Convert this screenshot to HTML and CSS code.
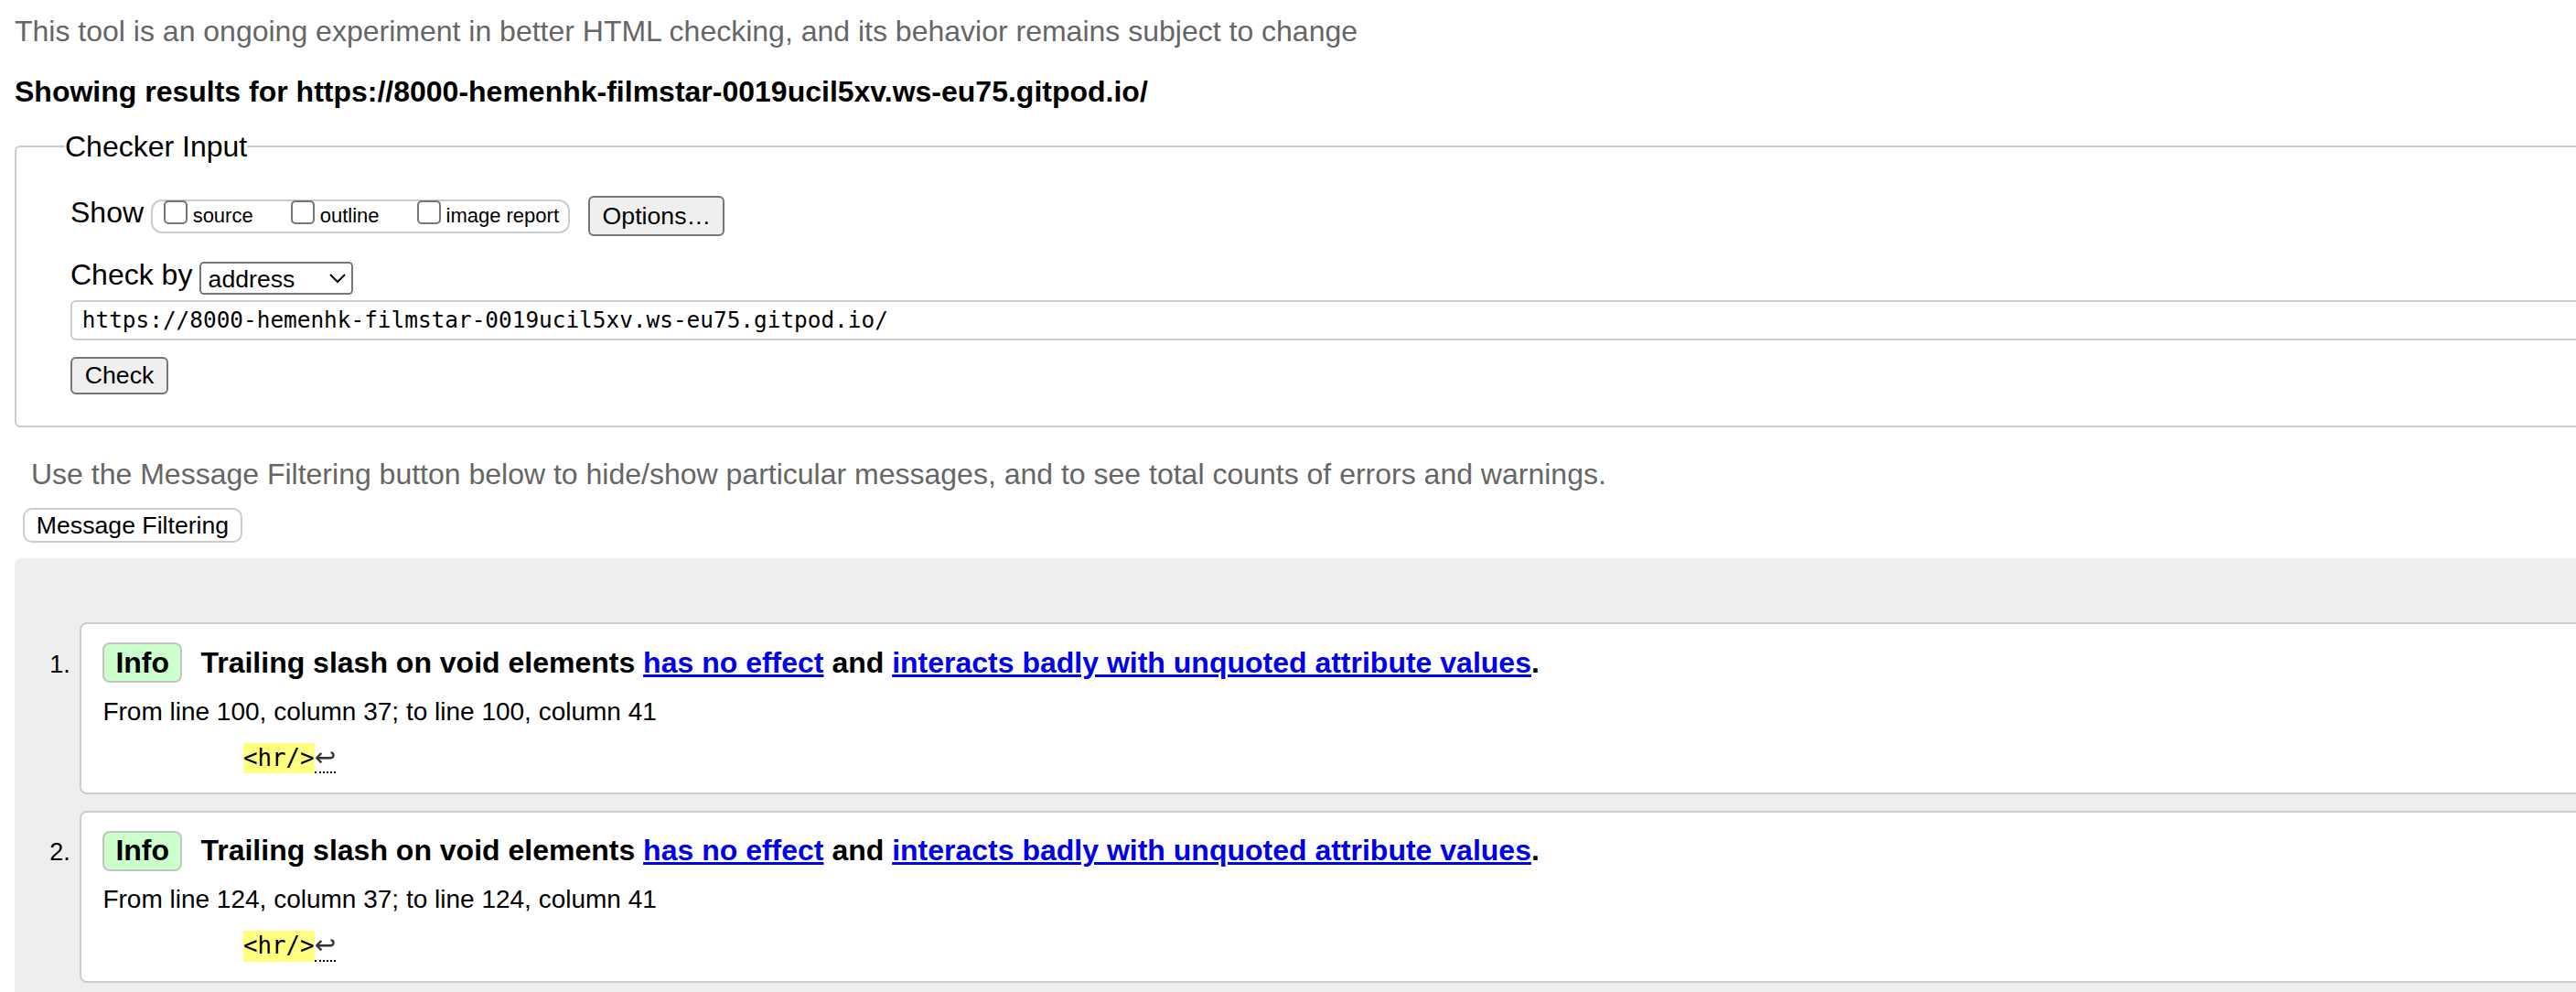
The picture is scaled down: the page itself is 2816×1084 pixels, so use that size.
FILE: index.html
```html
<!DOCTYPE html>
<html lang="en">
<head>
<meta charset="utf-8">
<title>Showing results for https://8000-hemenhk-filmstar-0019ucil5xv.ws-eu75.gitpod.io/ - Nu Html Checker</title>
<link rel="stylesheet" href="styles.css">
</head>
<body>
<div class="frame">
<div class="page">
  <p class="notice">This tool is an ongoing experiment in better HTML checking, and its behavior remains subject to change</p>
  <h2 class="results-for">Showing results for https://8000-hemenhk-filmstar-0019ucil5xv.ws-eu75.gitpod.io/</h2>

  <form class="checker">
    <fieldset>
      <legend>Checker Input</legend>
      <div class="fields">
        <div class="show-row">
          <span class="row-label">Show</span>
          <span class="checkboxes">
            <label><input type="checkbox"><span>source</span></label>
            <label><input type="checkbox"><span>outline</span></label>
            <label><input type="checkbox"><span>image report</span></label>
          </span>
          <button type="button" class="btn options">Options…</button>
        </div>
        <div class="checkby-row">
          <span class="row-label">Check by</span>
          <select class="docselect"><option>address</option><option>file upload</option><option>text input</option></select>
        </div>
        <input class="doc" type="url" value="https://8000-hemenhk-filmstar-0019ucil5xv.ws-eu75.gitpod.io/">
        <button type="button" class="btn submit">Check</button>
      </div>
    </fieldset>
  </form>

  <p class="filter-note">Use the Message Filtering button below to hide/show particular messages, and to see total counts of errors and warnings.</p>
  <button type="button" class="filter-btn">Message Filtering</button>

  <div class="results">
    <ol class="messages">
      <li class="msg">
        <span class="num">1.</span>
        <div class="msg-box">
          <p class="msg-title"><strong class="badge">Info</strong><span class="msg-text">Trailing slash on void elements <a href="#">has no effect</a> and <a href="#">interacts badly with unquoted attribute values</a>.</span></p>
          <p class="location">From line 100, column 37; to line 100, column 41</p>
          <p class="extract"><code class="hl">&lt;hr/&gt;</code><span class="lf">↩</span></p>
        </div>
      </li>
      <li class="msg">
        <span class="num">2.</span>
        <div class="msg-box">
          <p class="msg-title"><strong class="badge">Info</strong><span class="msg-text">Trailing slash on void elements <a href="#">has no effect</a> and <a href="#">interacts badly with unquoted attribute values</a>.</span></p>
          <p class="location">From line 124, column 37; to line 124, column 41</p>
          <p class="extract"><code class="hl">&lt;hr/&gt;</code><span class="lf">↩</span></p>
        </div>
      </li>
    </ol>
  </div>
</div>
</div>
</body>
</html>
```

FILE: styles.css
```css
html {
  overflow: hidden;
}

body {
  margin: 0;
  font-family: "Liberation Sans", Arial, sans-serif;
  font-size: 16px;
  line-height: normal;
  color: #000;
  background: #fff;
}

.frame {
  overflow: hidden;
  height: 1084px;
}

.page {
  zoom: 2;
  width: 1600px;
  padding: 8px;
}

.notice {
  margin: 0;
  color: #666;
}

.results-for {
  margin: 14.6px 0 11.2px;
  font-size: 16px;
  font-weight: bold;
}

.checker {
  margin: 0;
}

.checker fieldset {
  margin: 0;
  padding: 17.6px 0 17px 0;
  border: 1px solid #ccc;
  border-radius: 3px;
  min-width: 0;
}

.checker legend {
  padding: 0;
  margin-left: 26.5px;
  font-size: 16px;
}

.fields {
  padding-left: 29.5px;
}

.show-row {
  display: flex;
  align-items: flex-start;
}

.checkboxes {
  display: flex;
  align-items: flex-start;
  gap: 16.5px;
  box-sizing: border-box;
  height: 18.6px;
  margin: 2.1px 0 0 4.2px;
  padding: 0 5.2px 0 1.6px;
  border: 1px solid #ccc;
  border-radius: 6px;
}

.checkboxes label {
  display: flex;
  align-items: flex-start;
  font-size: 11px;
  line-height: 16.4px;
}

.checkboxes input {
  width: 13px;
  height: 13px;
  margin: -0.6px 3px 0 4px;
}

.btn {
  font-family: "Liberation Sans", Arial, sans-serif;
  font-size: 13.333px;
  line-height: normal;
  color: #000;
  background: #efefef;
  border: 1px solid #767676;
  border-radius: 3px;
}

.options {
  margin: 0.3px 0 0 10px;
  padding: 2.1px 6.6px;
}

.checkby-row {
  display: flex;
  align-items: flex-start;
  margin-top: 12.2px;
}

.docselect {
  width: 84px;
  height: 18.4px;
  margin: 1.7px 0 0 3.6px;
  font-family: "Liberation Sans", Arial, sans-serif;
  font-size: 13.333px;
  color: #000;
}

.doc {
  display: block;
  box-sizing: border-box;
  width: 1500px;
  height: 21.6px;
  margin: 3px 0 0;
  padding: 0 5.4px;
  border: 1px solid #ccc;
  border-radius: 3px;
  font-family: "DejaVu Sans Mono", "Liberation Mono", monospace;
  font-size: 12.2px;
  color: #000;
  background: #fff;
  outline: none;
}

.submit {
  display: block;
  margin-top: 9px;
  padding: 1.7px 6.9px;
}

.filter-note {
  margin: 16.5px 0 0 9px;
  color: #666;
}

.filter-btn {
  display: block;
  margin: 9.1px 0 0 4.5px;
  padding: 0.6px 6.4px;
  font-family: "Liberation Sans", Arial, sans-serif;
  font-size: 13.333px;
  line-height: normal;
  color: #000;
  background: #fff;
  border: 1px solid #ccc;
  border-radius: 5px;
}

.results {
  margin-top: 8.5px;
  padding: 35.2px 0 40px;
  background: #eee;
  border-radius: 4px;
}

.messages {
  margin: 0;
  padding: 0;
  list-style: none;
}

.msg {
  display: flex;
  align-items: baseline;
  margin-bottom: 8.9px;
}

.num {
  flex: 0 0 35.7px;
  box-sizing: border-box;
  padding-right: 5.3px;
  text-align: right;
  font-size: 13.5px;
}

.msg-box {
  flex: 1;
  padding: 10.1px 0 10.6px 11.5px;
  background: #fff;
  border: 1px solid #ccc;
  border-radius: 4px;
}

.msg-title {
  display: flex;
  align-items: baseline;
  margin: 0;
  font-weight: bold;
}

.badge {
  margin-right: 10.2px;
  padding: 0.6px 6px;
  background: #ccffcc;
  border: 1px solid #c4c4c4;
  border-radius: 4px;
}

.msg-text a {
  color: #0000ee;
  text-decoration: underline;
}

.location {
  margin: 7.95px 0 0;
  font-size: 14px;
}

.extract {
  display: flex;
  height: 16.7px;
  margin: 8.95px 0 0 76.8px;
}

.hl {
  display: block;
  height: 16.7px;
  line-height: 16.7px;
  font-family: "DejaVu Sans Mono", "Liberation Mono", monospace;
  font-size: 12.9px;
  background: #ffff80;
  color: #000;
}

.lf {
  display: block;
  box-sizing: border-box;
  height: 16.7px;
  line-height: 15.7px;
  font-family: "DejaVu Sans", sans-serif;
  font-size: 14px;
  color: #333;
  border-bottom: 1px dotted #000;
}
```
